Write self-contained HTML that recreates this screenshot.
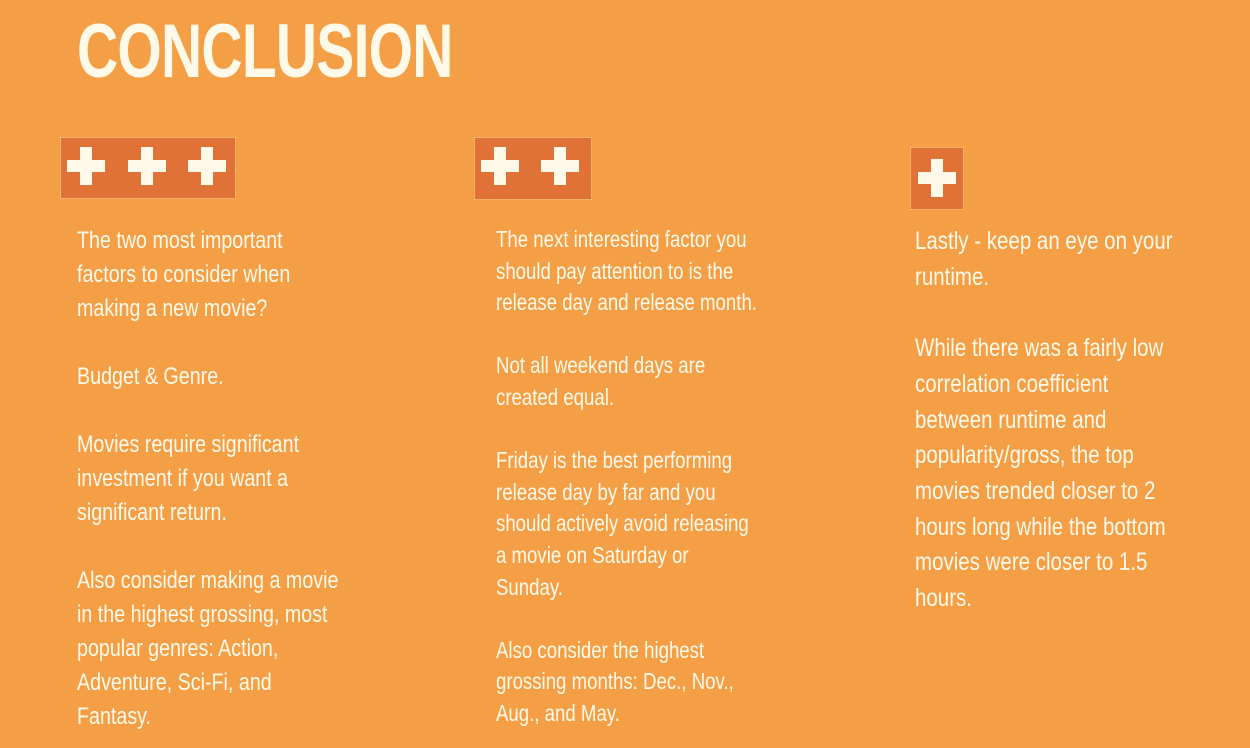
<!DOCTYPE html>
<html><head><meta charset="utf-8"><style>
body{margin:0;width:1250px;height:748px;background:#F49F45;overflow:hidden;position:relative;font-family:"Liberation Sans Narrow","Liberation Sans",sans-serif;color:#FFF9EA}
h1{position:absolute;left:77px;top:10px;margin:0;font-size:76px;font-weight:bold;line-height:84px;transform:scaleX(0.75);transform-origin:left top;letter-spacing:-1px}
.box{position:absolute;background:#E07137;outline:1px dotted #F8C08A}
.p{position:absolute;width:38px;height:38px}
.p:before,.p:after{content:"";position:absolute;background:#FFF9EA}
.p:before{left:0;top:13px;width:38px;height:12px}
.p:after{left:13px;top:0;width:12px;height:38px}
.t{position:absolute;white-space:nowrap;transform-origin:left top}
</style></head><body>
<h1>CONCLUSION</h1>
<div class="box" style="left:61px;top:138px;width:174px;height:60px"></div>
<div class="p" style="left:67px;top:147px"></div><div class="p" style="left:128px;top:147px"></div><div class="p" style="left:188px;top:147px"></div>
<div class="box" style="left:475px;top:138px;width:116px;height:61px"></div>
<div class="p" style="left:481px;top:147px"></div><div class="p" style="left:541px;top:147px"></div>
<div class="box" style="left:911px;top:148px;width:52px;height:61px"></div>
<div class="p" style="left:918px;top:159px"></div>

<div class="t" style="left:77px;top:224px;font-size:24px;line-height:34px;transform:scaleX(0.82)">The two most important<br>factors to consider when<br>making a new movie?<br><br>Budget &amp; Genre.<br><br>Movies require significant<br>investment if you want a<br>significant return.<br><br>Also consider making a movie<br>in the highest grossing, most<br>popular genres: Action,<br>Adventure, Sci-Fi, and<br>Fantasy.</div>

<div class="t" style="left:496px;top:224px;font-size:23px;line-height:31.6px;transform:scaleX(0.81)">The next interesting factor you<br>should pay attention to is the<br>release day and release month.<br><br>Not all weekend days are<br>created equal.<br><br>Friday is the best performing<br>release day by far and you<br>should actively avoid releasing<br>a movie on Saturday or<br>Sunday.<br><br>Also consider the highest<br>grossing months: Dec., Nov.,<br>Aug., and May.</div>

<div class="t" style="left:915px;top:224px;font-size:25px;line-height:35.7px;transform:scaleX(0.82)">Lastly - keep an eye on your<br>runtime.<br><br>While there was a fairly low<br>correlation coefficient<br>between runtime and<br>popularity/gross, the top<br>movies trended closer to 2<br>hours long while the bottom<br>movies were closer to 1.5<br>hours.</div>
</body></html>
